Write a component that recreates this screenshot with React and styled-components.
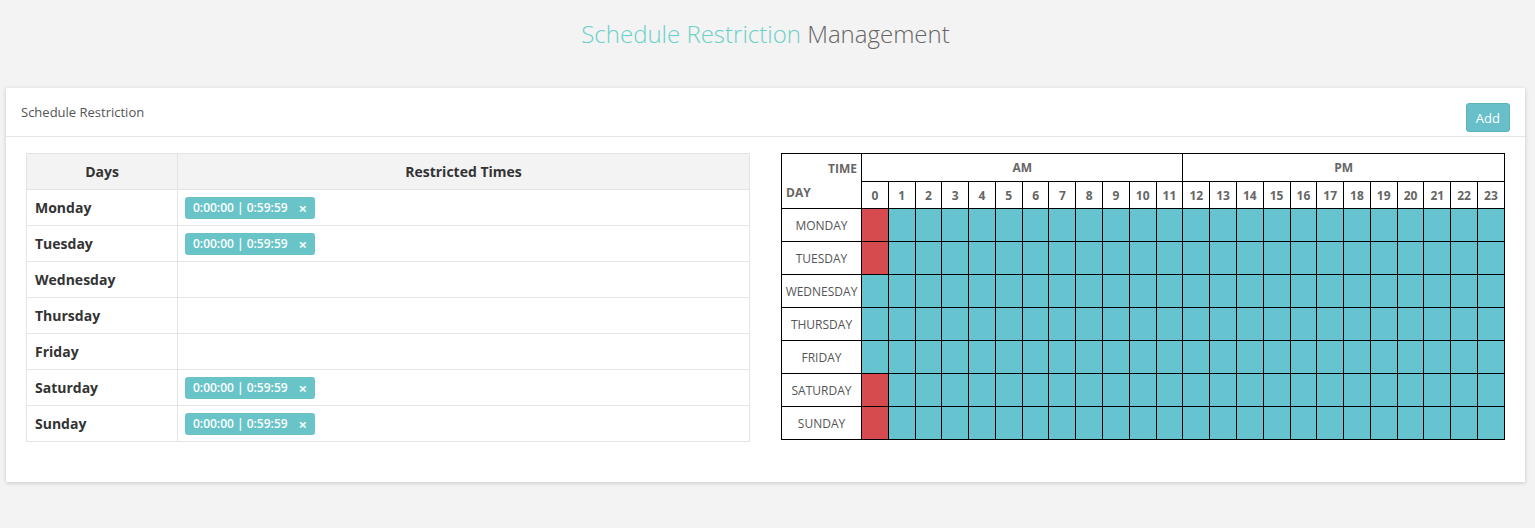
import React from 'react';
import styled, { createGlobalStyle } from 'styled-components';

const GlobalStyle = createGlobalStyle`
  body {
    margin: 0;
    background: #f3f3f3;
    font-family: 'Open Sans', 'Noto Sans', sans-serif;
  }
`;

const Page = styled.div`
  padding: 16px 10px 40px 6px;
`;

const Title = styled.h1`
  margin: 0 0 36px;
  text-align: center;
  font-size: 24px;
  font-weight: 300;
  line-height: 36px;
  color: #666;
`;

const Accent = styled.span`
  color: #6bd0c9;
`;

const Card = styled.div`
  background: #fff;
  box-shadow: 0 1px 4px rgba(0, 0, 0, 0.18);
`;

const CardHeader = styled.div`
  display: flex;
  align-items: center;
  justify-content: space-between;
  height: 48px;
  padding: 0 15px 0 15px;
  border-bottom: 1px solid #e6e6e6;
  font-size: 13px;
  color: #555;
`;

const AddButton = styled.button`
  margin-top: 11px;
  height: 29px;
  padding: 0 9px;
  border: 1px solid #5bb3be;
  border-radius: 3px;
  background: #68bfca;
  color: #fff;
  font-family: inherit;
  font-size: 13px;
`;

const CardBody = styled.div`
  display: grid;
  grid-template-columns: 1fr 1fr;
  column-gap: 31px;
  padding: 16px 20px 40px;
  align-items: start;
`;

const DayTable = styled.table`
  width: 100%;
  border-collapse: collapse;
  table-layout: fixed;
  font-size: 14px;
  color: #333;
`;

const HeadCell = styled.th`
  height: 35px;
  padding: 0;
  border: 1px solid #e4e4e4;
  background: #f3f3f3;
  font-weight: 700;
  text-align: center;
  width: ${(p) => p.width || 'auto'};
`;

const DayCell = styled.td`
  height: 35px;
  padding: 0 8px;
  border: 1px solid #e4e4e4;
  font-weight: 700;
`;

const TimesCell = styled.td`
  height: 35px;
  padding: 0 7px;
  border: 1px solid #e4e4e4;
`;

const Tag = styled.span`
  display: inline-flex;
  align-items: center;
  gap: 11px;
  height: 22px;
  padding: 0 8px;
  border-radius: 3px;
  background: #69c4c8;
  color: #fff;
  font-size: 12px;
  font-weight: 600;
`;

const Remove = styled.span`
  font-size: 15px;
  font-weight: 700;
  opacity: 0.9;
`;

const Grid = styled.table`
  width: 100%;
  border-collapse: collapse;
  table-layout: fixed;
  border: 1px solid #000;
`;

const Corner = styled.th`
  width: 71px;
  padding: 0 4px;
  border: 1px solid #000;
  font-size: 12px;
  font-weight: 700;
  color: #666;
`;

const CornerLine = styled.div`
  text-align: ${(p) => p.align};
  line-height: 24px;
`;

const Period = styled.th`
  height: 27px;
  padding: 0;
  border: 1px solid #000;
  font-size: 12px;
  font-weight: 700;
  color: #666;
`;

const Hour = styled.th`
  height: 26px;
  padding: 0;
  border: 1px solid #000;
  font-size: 12px;
  font-weight: 700;
  color: #666;
`;

const DayLabel = styled.td`
  height: 32px;
  padding: 0;
  border: 1px solid #000;
  text-align: center;
  font-size: 12px;
  color: #555;
`;

const Slot = styled.td`
  border: 1px solid #000;
  padding: 0;
  background: ${(p) => (p.blocked ? '#d54b4e' : '#66c3d0')};
`;

const days = [
  { name: 'Monday', times: ['0:00:00 | 0:59:59'] },
  { name: 'Tuesday', times: ['0:00:00 | 0:59:59'] },
  { name: 'Wednesday', times: [] },
  { name: 'Thursday', times: [] },
  { name: 'Friday', times: [] },
  { name: 'Saturday', times: ['0:00:00 | 0:59:59'] },
  { name: 'Sunday', times: ['0:00:00 | 0:59:59'] },
];

const hours = Array.from({ length: 24 }, (_, i) => i);

export default function App() {
  return (
    <Page>
      <GlobalStyle />
      <Title>
        <Accent>Schedule Restriction</Accent> Management
      </Title>
      <Card>
        <CardHeader>
          <span>Schedule Restriction</span>
          <AddButton>Add</AddButton>
        </CardHeader>
        <CardBody>
          <DayTable>
            <thead>
              <tr>
                <HeadCell width="150px">Days</HeadCell>
                <HeadCell>Restricted Times</HeadCell>
              </tr>
            </thead>
            <tbody>
              {days.map((day) => (
                <tr key={day.name}>
                  <DayCell>{day.name}</DayCell>
                  <TimesCell>
                    {day.times.map((t) => (
                      <Tag key={t}>
                        {t}
                        <Remove>×</Remove>
                      </Tag>
                    ))}
                  </TimesCell>
                </tr>
              ))}
            </tbody>
          </DayTable>

          <Grid>
            <thead>
              <tr>
                <Corner rowSpan={2}>
                  <CornerLine align="right">TIME</CornerLine>
                  <CornerLine align="left">DAY</CornerLine>
                </Corner>
                <Period colSpan={12}>AM</Period>
                <Period colSpan={12}>PM</Period>
              </tr>
              <tr>
                {hours.map((h) => (
                  <Hour key={h}>{h}</Hour>
                ))}
              </tr>
            </thead>
            <tbody>
              {days.map((day) => (
                <tr key={day.name}>
                  <DayLabel>{day.name.toUpperCase()}</DayLabel>
                  {hours.map((h) => (
                    <Slot key={h} blocked={h === 0 && day.times.length > 0} />
                  ))}
                </tr>
              ))}
            </tbody>
          </Grid>
        </CardBody>
      </Card>
    </Page>
  );
}
